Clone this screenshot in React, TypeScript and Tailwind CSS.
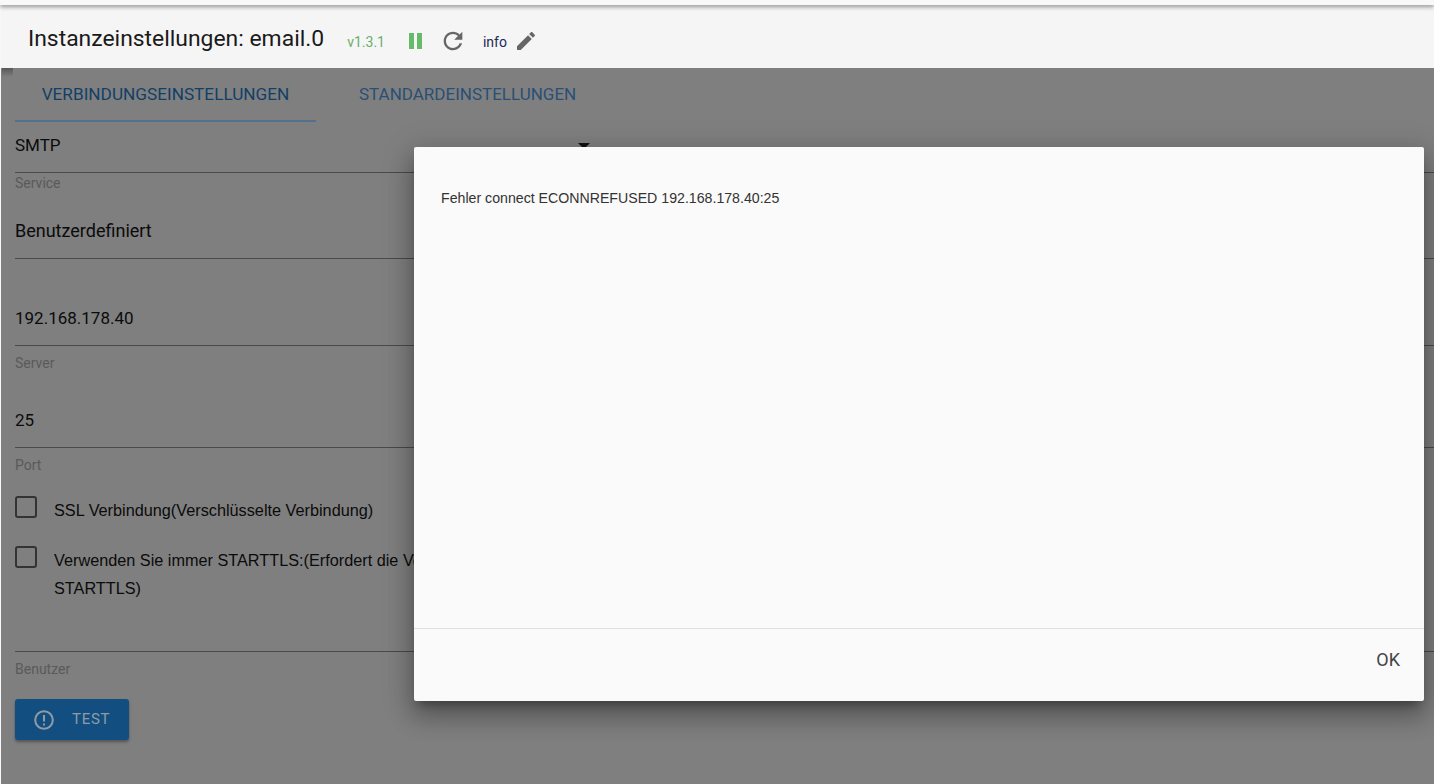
import React from 'react';

const Field = ({
  value,
  label,
  className,
  valueClass = 'text-[17px]',
  labelClass = 'mt-[7px]',
  children,
}: {
  value?: string;
  label?: string;
  className: string;
  valueClass?: string;
  labelClass?: string;
  children?: React.ReactNode;
}) => (
  <div className={`relative ${className}`}>
    <div className={`h-[41px] leading-[28px] text-[#0b0b0b] border-b border-[#4a4a4a] box-content ${valueClass}`}>{value}</div>
    {children}
    <div className={`h-[21px] text-[14px] leading-[20px] text-[#5a5a5a] ${labelClass}`}>{label}</div>
  </div>
);

const Check = ({ className, children }: { className: string; children: React.ReactNode }) => (
  <div className={`flex ${className}`}>
    <div className="w-[22px] h-[22px] shrink-0 rounded-[3px] border-2 border-[#333333]" />
    <div className="ml-[17px] text-[16.25px] leading-[28px] text-[#0b0b0b] font-['Liberation_Sans',sans-serif] whitespace-nowrap">{children}</div>
  </div>
);

export default function App() {
  return (
    <div className="relative w-[1434px] h-[784px] overflow-hidden bg-[#f8f8f8] font-['Roboto',sans-serif]">
      <div className="relative z-10 h-[5px] bg-[#f8f8f8] shadow-[0_2px_4px_rgba(0,0,0,0.4)]" />
      <div className="h-[63px] ml-[1px] bg-[#f5f5f5] flex items-center pl-[27px] pt-[9px]">
        <span className="mb-[4px] text-[22.9px] text-[#1a1a1a]">Instanzeinstellungen: email.0</span>
        <span className="ml-[23px] mt-[2px] text-[14px] text-[#6aae6e]">v1.3.1</span>
        <div className="ml-[24px] flex gap-[3px]">
          <div className="w-[5px] h-[16px] bg-[#66bb6a]" />
          <div className="w-[5px] h-[16px] bg-[#66bb6a]" />
        </div>
        <svg width="28" height="28" viewBox="0 0 24 24" fill="#666666" className="ml-[17px]">
          <path d="M17.65 6.35C16.2 4.9 14.21 4 12 4c-4.42 0-7.99 3.58-7.99 8s3.57 8 7.99 8c3.73 0 6.84-2.55 7.73-6h-2.08c-.82 2.33-3.04 4-5.65 4-3.31 0-6-2.69-6-6s2.69-6 6-6c1.66 0 3.14.69 4.22 1.78L13 11h7V4l-2.35 2.35z" />
        </svg>
        <span className="ml-[16px] mt-[2px] text-[14px] text-[#1a2a55]">info</span>
        <svg width="24" height="24" viewBox="0 0 24 24" fill="#666666" className="ml-[7px]">
          <path d="M3 17.25V21h3.75L17.81 9.94l-3.75-3.75L3 17.25zM20.71 7.04c.39-.39.39-1.02 0-1.41l-2.34-2.34c-.39-.39-1.02-.39-1.41 0l-1.83 1.83 3.75 3.75 1.83-1.83z" />
        </svg>
      </div>
      <div className="relative ml-[1px] h-[716px] bg-[#7f7f7f] pl-[14px] flex flex-col">
        <div className="absolute left-[1px] top-0 w-[11px] h-[9px] bg-gradient-to-b from-[#585858] to-transparent" />
        <div className="flex h-[54px]">
          <div className="w-[301px] h-[54px] border-b-2 border-[#55708c] text-center text-[17.2px] leading-[52px] text-[#123f68]">VERBINDUNGSEINSTELLUNGEN</div>
          <div className="ml-[43px] text-[17px] leading-[52px] text-[#2a4f75]">STANDARDEINSTELLUNGEN</div>
        </div>
        <Field value="SMTP" label="Service" className="mt-[9px]" labelClass="mt-0">
          <div className="absolute left-[563px] top-[12px] w-0 h-0 border-x-[6px] border-x-transparent border-t-[6px] border-t-[#111111]" />
        </Field>
        <Field value="Benutzerdefiniert" className="mt-[23px]" valueClass="text-[18px]" labelClass="hidden" />
        <Field value="192.168.178.40" label="Server" className="mt-[45px]" />
        <Field value="25" label="Port" className="mt-[32px]" />
        <Check className="mt-[20px]">SSL Verbindung(Verschlüsselte Verbindung)</Check>
        <Check className="mt-[22px]">
          Verwenden Sie immer STARTTLS:(Erfordert die Verwendung von<br />STARTTLS)
        </Check>
        <Field label="Benutzer" className="mt-[8px]" />
        <div className="mt-[19px] w-[114px] h-[41px] rounded-[3px] bg-[#124f80] shadow-[0_2px_3px_rgba(0,0,0,0.35)] flex items-center pl-[19px] text-[#8f9ba6]">
          <svg width="20" height="20" viewBox="0 0 20 20" fill="none" stroke="currentColor" strokeWidth="2">
            <circle cx="10" cy="10" r="8.8" />
            <path d="M10 5v6.5M10 13.5v2" />
          </svg>
          <span className="ml-[18px] text-[15px] tracking-[0.7px]">TEST</span>
        </div>
      </div>
      <div className="absolute left-[414px] top-[147px] w-[1010px] h-[554px] rounded-[2px] bg-[#fafafa] flex flex-col shadow-[0_16px_24px_2px_rgba(0,0,0,0.2),0_6px_30px_5px_rgba(0,0,0,0.16),0_8px_10px_-5px_rgba(0,0,0,0.35)]">
        <div className="h-[482px] border-b border-[#e0e0e0] pt-[41px] pl-[27px] text-[14.17px] leading-[20px] text-[#333333] font-['Liberation_Sans',sans-serif]">
          Fehler connect ECONNREFUSED 192.168.178.40:25
        </div>
        <div className="flex-1 flex justify-end pt-[20px] pr-[24px] text-[18px] leading-[21px] text-[#444444]">OK</div>
      </div>
    </div>
  );
}
